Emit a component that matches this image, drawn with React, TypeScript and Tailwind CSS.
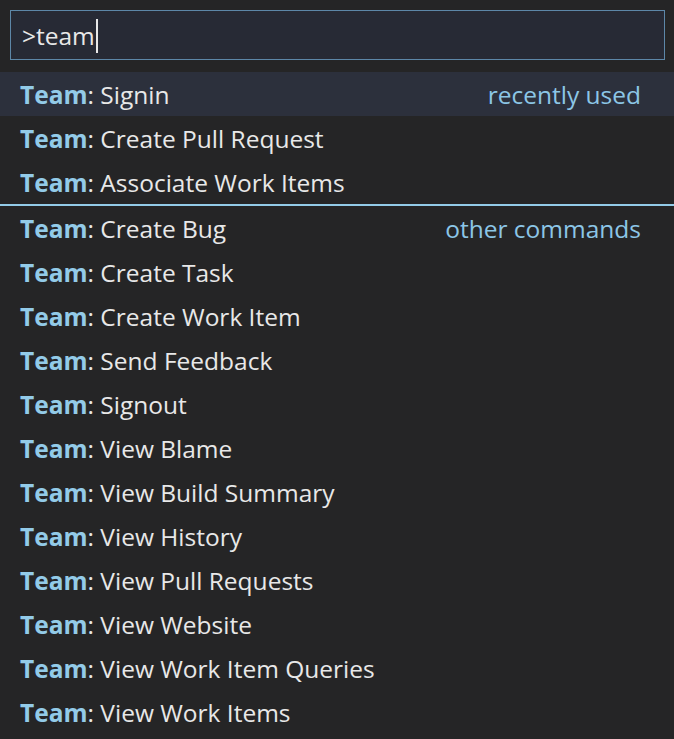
const commands: { name: string; label?: string }[] = [
  { name: 'Signin', label: 'recently used' },
  { name: 'Create Pull Request' },
  { name: 'Associate Work Items' },
  { name: 'Create Bug', label: 'other commands' },
  { name: 'Create Task' },
  { name: 'Create Work Item' },
  { name: 'Send Feedback' },
  { name: 'Signout' },
  { name: 'View Blame' },
  { name: 'View Build Summary' },
  { name: 'View History' },
  { name: 'View Pull Requests' },
  { name: 'View Website' },
  { name: 'View Work Item Queries' },
  { name: 'View Work Items' },
];

export default function App() {
  return (
    <div
      className="w-[674px] h-[739px] overflow-hidden bg-[#252526] text-[#e8e8e8] text-[24.5px]"
      style={{ fontFamily: '"Open Sans", "Noto Sans", sans-serif' }}
    >
      <div className="pt-[10px] pl-[10px] pr-[9px]">
        <div className="h-[50px] border border-[#5d87a8] bg-[#272a35] flex items-center pl-[11px] pt-[2px]">
          <span>&gt;team</span>
          <span className="w-[2px] h-[34px] bg-[#e8e8e8] ml-[1px]" />
        </div>
      </div>

      <div className="mt-[12px]">
        {commands.map((cmd, i) => (
          <div
            key={cmd.name}
            className={
              'flex items-center justify-between pl-[20px] pr-[33px] pt-[3px] leading-none ' +
              (i === 0 ? 'h-[44px] bg-[#2c303c]' : i === 3 ? 'h-[46px] border-t-2 border-[#93cbe8]' : 'h-[44px]')
            }
          >
            <span className="whitespace-nowrap">
              <span className="font-bold text-[#93cbe8]">Team</span>: {cmd.name}
            </span>
            {cmd.label && <span className="text-[#8cc6e6]">{cmd.label}</span>}
          </div>
        ))}
      </div>
    </div>
  );
}
